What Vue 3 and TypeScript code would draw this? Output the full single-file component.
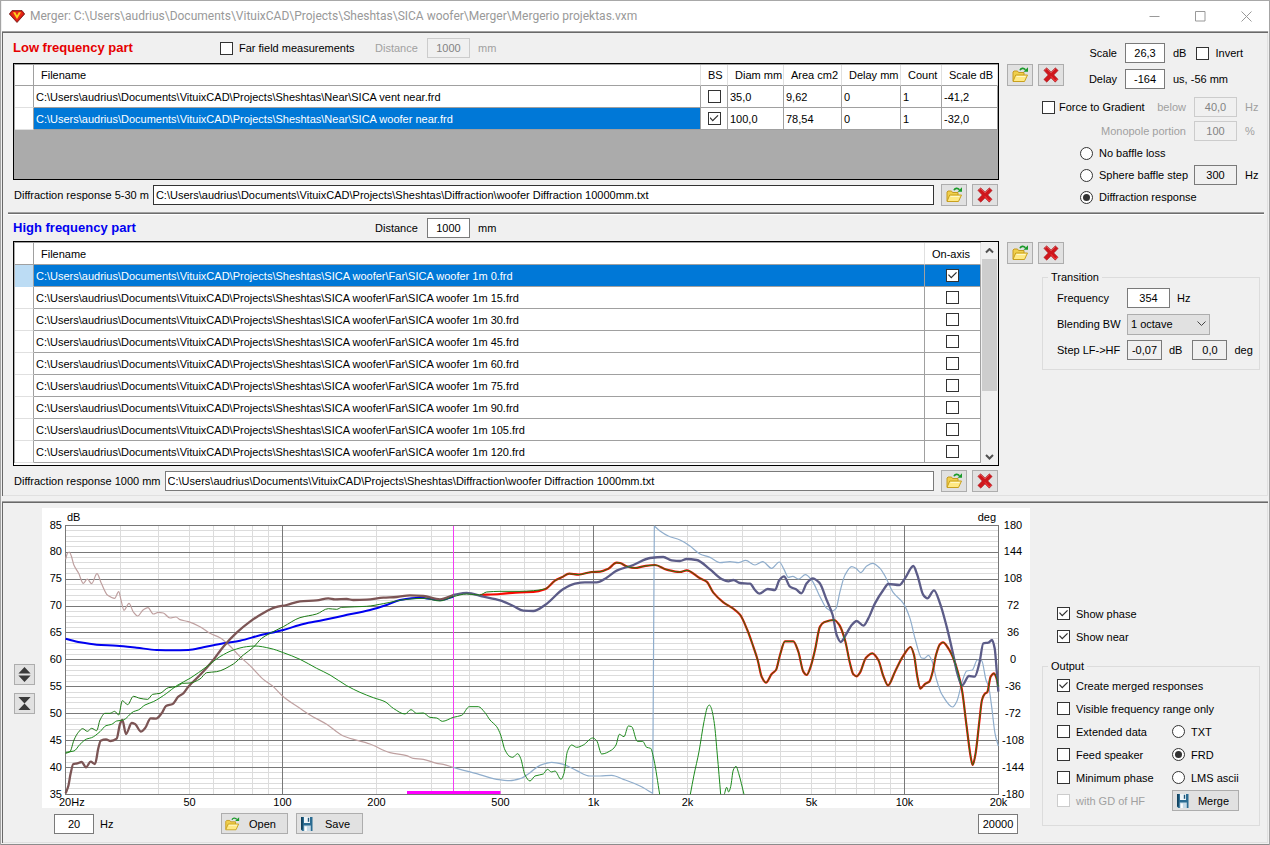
<script setup lang="ts">
import { ref } from 'vue'

type Point = [number, number]

interface NearFile {
  path: string
  bs: boolean
  cells: string[]
}

const root = 'C:\\Users\\audrius\\Documents\\VituixCAD\\Projects\\Sheshtas\\'

const nearFiles = ref<NearFile[]>([
  { path: root + 'Near\\SICA vent near.frd', bs: false, cells: ['35,0', '9,62', '0', '1', '-41,2'] },
  { path: root + 'Near\\SICA woofer near.frd', bs: true, cells: ['100,0', '78,54', '0', '1', '-32,0'] },
])
const nearHeads = ['Diam mm', 'Area cm2', 'Delay mm', 'Count', 'Scale dB']

const farFiles = ref(
  [0, 15, 30, 45, 60, 75, 90, 105, 120].map((angle) => ({
    path: `${root}SICA woofer\\Far\\SICA woofer 1m ${angle}.frd`,
    onAxis: angle === 0,
  })),
)

const baffle = ref('diffraction')
const format = ref('frd')

/* Plot frame inside the chart surface */
const left = 65.3
const decade = 311
const top = 525.3
const stepY = 26.9
const right = 998

const xOf = (f: number) => Math.floor(left + Math.log10(f / 20) * decade) + 0.5
const yOf = (db: number) => Math.floor(top + ((85 - db) / 5) * stepY) + 0.5

const minorX: number[] = []
for (const base of [10, 100, 1000, 10000]) {
  for (let k = 2; k < 10; k++) {
    const f = base * k
    if (f > 20 && f < 20000) minorX.push(xOf(f))
  }
}
const majorX = [100, 1000, 10000].map(xOf)
const minorY: number[] = []
for (let d = 36; d < 85; d++) if (d % 5) minorY.push(yOf(d))
const majorY = [80, 75, 70, 65, 60, 55, 50, 45, 40].map(yOf)

const dbLabels = [85, 80, 75, 70, 65, 60, 55, 50, 45, 40, 35]
const degLabels = [180, 144, 108, 72, 36, 0, -36, -72, -108, -144, -180]
const hzLabels = [
  { f: 50, t: '50' }, { f: 100, t: '100' }, { f: 200, t: '200' }, { f: 500, t: '500' },
  { f: 1000, t: '1k' }, { f: 2000, t: '2k' }, { f: 5000, t: '5k' }, { f: 10000, t: '10k' }, { f: 20000, t: '20k' },
]

const parse = (s: string): Point[] => s.trim().split(/\s+/).map((p) => p.split(',').map(Number) as Point)

/* Monotone-limited spline through the samples */
function curve(s: string): string {
  const p = parse(s)
  const slope = (a: Point, b: Point) => (b[1] - a[1]) / (b[0] - a[0])
  const m = p.map((_, i) => {
    if (i === 0) return slope(p[0], p[1])
    if (i === p.length - 1) return slope(p[i - 1], p[i])
    const a = slope(p[i - 1], p[i])
    const b = slope(p[i], p[i + 1])
    return a * b <= 0 ? 0 : (2 * a * b) / (a + b)
  })
  let d = `M${p[0][0]} ${p[0][1]}`
  for (let i = 1; i < p.length; i++) {
    const h = (p[i][0] - p[i - 1][0]) / 3
    const c1 = `${(p[i - 1][0] + h).toFixed(1)} ${(p[i - 1][1] + m[i - 1] * h).toFixed(1)}`
    const c2 = `${(p[i][0] - h).toFixed(1)} ${(p[i][1] - m[i] * h).toFixed(1)}`
    d += `C${c1} ${c2} ${p[i][0]} ${p[i][1]}`
  }
  return d
}

const mergedTail = `1665,242 1685,232 1708,221 1735,224 1775,216 1800,215 1825,206 1850,188 1860,189 1880,199 1905,204 1930,199
 1965,195 2000,209 2040,216 2060,211 2100,235 2120,245 2140,278 2170,307 2200,326 2220,344 2242,390 2260,440 2273,480 2285,530
 2298,548 2315,522 2328,510 2340,465 2355,424 2380,424 2395,455 2410,515 2420,525 2432,500 2445,450 2460,380 2472,367 2502,360
 2518,375 2535,420 2550,490 2560,523 2570,529 2580,518 2598,473 2617,460 2635,480 2650,528 2664,556 2685,515 2710,467 2732,441
 2742,465 2752,530 2761,566 2775,552 2788,545 2798,515 2808,465 2820,433 2829,427 2845,445 2862,480 2885,565 2900,680 2912,770
 2918,795 2926,765 2938,665 2946,600 2954,582 2962,576 2972,530 2982,520 2989,533 2995,560`

const phaseLow = curve(`197,178 202,160 208,156 214,168 222,196 236,220 250,250 262,237 275,251 291,221 304,250 323,286 344,295
 356,275 363,300 372,331 387,310 400,336 413,348 430,329 444,323 460,342 475,337 490,339 510,354 528,351 540,359 565,365 600,380
 630,400 660,413 690,438 720,470 750,497 790,538 820,560 850,590 900,625 930,645 980,673 1030,708 1110,732 1170,758 1220,767
 1240,775 1270,778 1310,790 1330,793 1360,802`)
const phaseHigh = curve(`1360,802 1380,808 1430,821 1490,838 1530,842 1560,836 1590,818 1620,796 1655,787 1690,793 1730,812
 1770,828 1800,828 1835,826 1870,838 1920,858 1958,880`) + 'L1963 78' + curve(`1963,78 1980,93 2005,108 2040,120 2070,138
 2100,162 2130,172 2160,188 2190,185 2215,188 2237,181 2265,195 2288,185 2315,205 2338,186 2352,208 2365,232 2378,229 2396,237
 2416,224 2435,240 2460,290 2480,325 2495,333 2508,326 2520,275 2535,225 2555,200 2568,205 2582,218 2600,198 2618,190 2640,205
 2655,228 2680,278 2710,310 2730,355 2745,415 2765,474 2773,475 2785,466 2795,480 2810,540 2825,582 2858,621 2870,605 2888,540
 2900,513 2917,510 2932,480 2945,482 2958,540 2966,560 2975,620 2985,700 2995,738`).replace('M', 'L')
const diffraction = curve(`197,416 240,427 290,434 350,437 410,443 470,450 520,451 565,450 610,442 670,430 720,422 780,406 850,390
 910,372 970,360 1030,347 1110,330 1160,315 1200,300 1260,293 1320,300 1360,290`)
const lowPart = curve(`197,880 205,858 212,820 220,792 232,790 245,786 258,802 272,785 285,792 295,745 302,722 318,718 332,723
 350,716 360,672 367,660 378,702 395,669 405,672 423,695 435,685 452,655 468,656 485,640 498,618 518,612 535,590 550,580 565,560
 600,525 640,480 670,440 710,398 750,365 785,342 825,322 860,315 900,304 950,301 985,295 1005,298 1040,297 1060,300 1100,299
 1150,293 1190,291 1230,286 1270,288 1320,298 1360,285`)
const highPart = curve(`1360,285 1400,279 1450,290 1500,301 1540,318 1570,332 1600,333 1635,315 1690,267 1725,251 1755,247 1790,247
 1820,233 1850,212 1900,195 1950,174 1990,171 2015,181 2040,183 2060,177 2090,180 2130,208 2165,237 2185,244 2200,240 2220,249
 2250,251 2265,270 2278,281 2303,267 2325,270 2338,240 2352,229 2370,260 2388,268 2404,280 2420,250 2438,235 2458,248 2480,300
 2498,345 2510,405 2522,426 2540,400 2555,375 2570,363 2590,377 2605,355 2625,310 2650,270 2665,252 2698,255 2715,235 2740,198
 2752,225 2770,285 2782,295 2802,271 2820,310 2840,380 2860,465 2872,520 2886,556 2907,528 2924,530 2938,490 2950,430 2965,428
 2976,420 2984,445 2990,510 2995,575`)
const merged = curve(`1440,285 1500,282 1560,277 1600,276 1635,268 ${mergedTail}`)
const mergedCore = curve(`197,760 210,755 222,720 235,697 248,686 262,694 275,685 290,692 300,660 315,640 330,640 344,634 356,645
 367,602 383,614 400,589 420,595 443,598 458,583 480,580 505,563 530,560 548,550 570,549 600,537 620,518 650,515 700,492 730,465
 760,442 785,415 810,400 850,380 900,353 950,342 985,326 1010,328 1025,322 1100,319 1150,311 1220,298 1270,295 1320,303 1360,290
 1400,282 1440,285 1460,276 1500,274 1560,274 1600,272 1635,267 ${mergedTail}`)
const nearSum = curve(`197,757 222,753 240,733 260,717 275,713 300,695 318,677 335,673 350,663 370,660 400,635 415,630 435,615
 460,605 500,580 530,557 570,535 620,500 660,470 700,450 740,440 765,438 810,445 850,458 900,478 950,505 990,525 1040,557
 1080,577 1120,593 1155,605 1180,625 1215,642 1233,629 1250,640 1270,639 1290,652 1310,654 1327,664 1360,652 1385,646 1408,620
 1435,620 1455,638 1470,660 1490,680 1502,705 1515,750 1530,770 1538,772 1553,761 1562,775 1575,825 1590,843 1605,828 1630,822
 1642,808 1655,816 1665,813 1683,838 1692,820 1702,755 1715,735 1730,742 1750,735 1778,714 1790,722 1805,762 1835,750 1848,735
 1858,703 1872,710 1885,678 1895,680 1912,724 1928,724 1940,742 1952,745 1962,780 1979,883`)
  + curve('2071,883 2082,825 2097,755 2112,665 2123,620 2128,615 2133,622 2143,670 2152,765 2162,883')
  + curve('2173,883 2180,862 2186,876 2192,860 2200,810 2208,799 2216,820 2232,883')
</script>

<template>
  <svg class="symbols" aria-hidden="true">
    <symbol id="i-open" viewBox="0 0 18 18">
      <path d="M2 15V6l1-1h3.500l1 1.500h5.500v3" fill="#f0cf4c" stroke="#c49a20" />
      <path d="M2 15.500l2.700-6.500h11.800l-3 6.500z" fill="#ffe984" stroke="#c8a01e" stroke-linejoin="round" />
      <path d="M5.500 10.500h9" stroke="#fff8c8" />
      <path d="M9 4.200c.8-2 3.500-2.700 5.500-.4" fill="none" stroke="#1a9a2a" stroke-width="1.600" />
      <path d="M12.500 5.700H17V1.300z" fill="#1a9a2a" />
    </symbol>
    <symbol id="i-del" viewBox="-1 -1 20 20">
      <path d="M1 3.800L4.200 1l4.900 4.600L13.800 1 17 3.900l-4.800 5 4.600 4.800-3.100 3.300-4.700-4.700L4.300 17 1 13.900 5.800 9z" fill="#cf171d" stroke="#a8282c" stroke-width=".6" stroke-linejoin="round" />
      <path d="M2 3.900l2.200-1.900 4.900 4.700L13.800 2" fill="none" stroke="#e46464" stroke-width=".8" />
      <path d="M9 10.500l4.700 5.200 2-2" fill="none" stroke="#ff4545" />
    </symbol>
    <symbol id="i-save" viewBox="0 0 14 16">
      <path d="M1 1h11.500v14H2.300L1 13.600z" fill="#2b6c92" />
      <path d="M1 1h1.700v12.500H1z" fill="#10425f" />
      <path d="M4 1h6v6H4z" fill="#eef5f9" />
      <path d="M7.800 1.800h1.400v4H7.800z" fill="#1f5578" />
      <path d="M3.800 9.500h7V15h-7z" fill="#c7dbe7" />
      <path d="M4.800 10.500h2V15h-2z" fill="#fff" />
    </symbol>
  </svg>

  <div class="window">
    <header class="titlebar">
      <svg class="gem" viewBox="0 0 16 13" aria-hidden="true">
        <path d="M3 .5h10L15.700 4 8 12.500.300 4z" fill="#d31a12" stroke="#5a0c08" stroke-width=".7" />
        <path d="M3.500 2h9l1.500 2L8 10.700 2 4z" fill="#e62a18" />
        <path d="M4 2.200h2.200L8 5.500l1.800-3.300H12L8 9z" fill="#ffd21e" />
      </svg>
      <h1>Merger: C:\Users\audrius\Documents\VituixCAD\Projects\Sheshtas\SICA woofer\Merger\Mergerio projektas.vxm</h1>
      <button class="sys" type="button" aria-label="Minimize"><svg viewBox="0 0 11 11"><path d="M.5 5.500h10" /></svg></button>
      <button class="sys" type="button" aria-label="Maximize"><svg viewBox="0 0 11 11"><path d="M.5.5h9.500v9.500H.5z" /></svg></button>
      <button class="sys" type="button" aria-label="Close"><svg viewBox="0 0 11 11"><path d="M.5.5l10 10M10.500.5l-10 10" /></svg></button>
    </header>

    <main class="panel">
      <section class="part">
        <div class="files">
          <div class="head">
            <h2 class="low">Low frequency part</h2>
            <label class="opt"><input type="checkbox" />Far field measurements</label>
            <label class="dim" for="lf-distance">Distance</label>
            <input id="lf-distance" class="num" value="1000" disabled />
            <span class="dim">mm</span>
          </div>
          <div class="frame near">
            <table>
              <colgroup>
                <col class="c-head" /><col /><col class="c-bs" /><col class="c-diam" /><col class="c-area" />
                <col class="c-delay" /><col class="c-count" /><col class="c-scale" />
              </colgroup>
              <thead>
                <tr><th></th><th>Filename</th><th>BS</th><th v-for="h in nearHeads" :key="h">{{ h }}</th></tr>
              </thead>
              <tbody>
                <tr v-for="(f, i) in nearFiles" :key="f.path">
                  <td></td>
                  <td :class="{ sel: i === 1 }">{{ f.path }}</td>
                  <td class="mid"><input v-model="f.bs" type="checkbox" aria-label="BS" /></td>
                  <td v-for="(c, k) in f.cells" :key="k">{{ c }}</td>
                </tr>
              </tbody>
            </table>
          </div>
          <div class="path">
            <label for="lf-path">Diffraction response 5-30 m</label>
            <input id="lf-path" class="text dark" :value="root + 'Diffraction\\woofer Diffraction 10000mm.txt'" />
            <div class="pair">
              <button class="tool" type="button" aria-label="Open"><svg><use href="#i-open" /></svg></button>
              <button class="tool" type="button" aria-label="Remove"><svg><use href="#i-del" /></svg></button>
            </div>
          </div>
        </div>

        <aside>
          <div class="aside-top">
            <div class="pair">
              <button class="tool" type="button" aria-label="Open"><svg><use href="#i-open" /></svg></button>
              <button class="tool" type="button" aria-label="Remove"><svg><use href="#i-del" /></svg></button>
            </div>
            <div class="scale-rows">
              <label for="scale">Scale</label>
              <input id="scale" class="num" value="26,3" />
              <div class="units"><span>dB</span><label class="opt"><input type="checkbox" />Invert</label></div>
              <label for="delay">Delay</label>
              <input id="delay" class="num" value="-164" />
              <span>us, -56 mm</span>
            </div>
          </div>
          <div class="baffle">
            <div class="split"><label class="opt near-gap"><input type="checkbox" />Force to Gradient</label><label class="dim" for="below">below</label></div>
            <input id="below" class="num" value="40,0" disabled />
            <span class="dim">Hz</span>
            <label class="dim end" for="mono">Monopole portion</label>
            <input id="mono" class="num" value="100" disabled />
            <span class="dim">%</span>
          </div>
          <div class="baffle radios">
            <label class="opt wide"><input v-model="baffle" type="radio" name="baffle" value="none" />No baffle loss</label>
            <label class="opt"><input v-model="baffle" type="radio" name="baffle" value="sphere" />Sphere baffle step</label>
            <input class="num readonly" value="300" readonly aria-label="Baffle step" />
            <span>Hz</span>
            <label class="opt wide"><input v-model="baffle" type="radio" name="baffle" value="diffraction" />Diffraction response</label>
          </div>
        </aside>
      </section>

      <hr />

      <section class="part">
        <div class="files">
          <div class="head short">
            <h2 class="high">High frequency part</h2>
            <span></span>
            <label for="hf-distance">Distance</label>
            <input id="hf-distance" class="num" value="1000" />
            <span>mm</span>
          </div>
          <div class="frame far">
            <table>
              <colgroup><col class="c-head" /><col /><col class="c-axis" /></colgroup>
              <thead><tr><th></th><th>Filename</th><th>On-axis</th></tr></thead>
              <tbody>
                <tr v-for="(f, i) in farFiles" :key="f.path" :class="{ current: i === 0 }">
                  <td></td>
                  <td>{{ f.path }}</td>
                  <td class="mid"><input v-model="f.onAxis" type="checkbox" aria-label="On-axis" /></td>
                </tr>
              </tbody>
            </table>
            <div class="scroll">
              <button type="button" aria-label="Scroll up"><svg viewBox="0 0 9 6"><path d="M1 4.500L4.500 1 8 4.500" /></svg></button>
              <div class="thumb"></div>
              <button type="button" aria-label="Scroll down"><svg viewBox="0 0 9 6"><path d="M1 1l3.500 3.500L8 1" /></svg></button>
            </div>
          </div>
          <div class="path">
            <label for="hf-path">Diffraction response 1000 mm</label>
            <input id="hf-path" class="text" :value="root + 'Diffraction\\woofer Diffraction 1000mm.txt'" />
            <div class="pair">
              <button class="tool" type="button" aria-label="Open"><svg><use href="#i-open" /></svg></button>
              <button class="tool" type="button" aria-label="Remove"><svg><use href="#i-del" /></svg></button>
            </div>
          </div>
        </div>

        <aside>
          <div class="pair far-tools">
            <button class="tool" type="button" aria-label="Open"><svg><use href="#i-open" /></svg></button>
            <button class="tool" type="button" aria-label="Remove"><svg><use href="#i-del" /></svg></button>
          </div>
          <fieldset class="transition">
            <legend>Transition</legend>
            <div class="row">
              <label for="freq">Frequency</label>
              <input id="freq" class="num" value="354" /><span>Hz</span>
            </div>
            <div class="row">
              <label for="blend">Blending BW</label>
              <div class="combo">
                <select id="blend"><option>1 octave</option></select>
                <svg viewBox="0 0 9 6" aria-hidden="true"><path d="M.5.5l4 4 4-4" /></svg>
              </div>
            </div>
            <div class="row">
              <label for="step-db" class="end">Step LF-&gt;HF</label>
              <input id="step-db" class="num small readonly" value="-0,07" readonly /><span>dB</span>
              <input class="num small readonly next" value="0,0" readonly aria-label="Step phase" /><span>deg</span>
            </div>
          </fieldset>
        </aside>
      </section>
    </main>

    <section class="panel lower">
      <div class="zoomers">
        <button type="button" aria-label="Expand"><svg viewBox="0 0 16 16"><path d="M8 0l6.500 7h-13zM8 16L1.500 9h13z" /></svg></button>
        <button type="button" aria-label="Collapse"><svg viewBox="0 0 16 16"><path d="M1.500 1h13L8 8zM1.500 15h13L8 8z" /></svg></button>
      </div>

      <div class="graph">
        <svg class="chart" viewBox="42 508 988 300" role="img" aria-label="Frequency response">
          <rect x="42" y="508" width="988" height="300" fill="#fff" />
          <g class="minor">
            <line v-for="x in minorX" :key="'x' + x" :x1="x" :x2="x" y1="526" y2="794" />
            <line v-for="y in minorY" :key="'y' + y" x1="66" :x2="right" :y1="y" :y2="y" />
          </g>
          <g class="major">
            <line v-for="x in majorX" :key="'x' + x" :x1="x" :x2="x" y1="526" y2="794" />
            <line v-for="y in majorY" :key="'y' + y" x1="66" :x2="right" :y1="y" :y2="y" />
            <rect x="65.5" y="525.5" width="933" height="269" fill="none" />
          </g>
          <path d="M453.500 526V794" stroke="#f53cf5" />
          <path d="M407 792.500h93.500" stroke="#f0f" stroke-width="3" />
          <g class="curves" transform="translate(0 500) scale(.33333)">
            <path :d="phaseLow" stroke="#bfa0a0" stroke-width="1.200" />
            <path :d="phaseHigh" stroke="#8fadcc" stroke-width="1.200" />
            <path :d="diffraction" stroke="#0000f0" stroke-width="2" />
            <path :d="lowPart" stroke="#7c5555" stroke-width="2.300" />
            <path :d="merged" stroke="#f80800" stroke-width="2.200" />
            <path :d="highPart" stroke="#5c5c88" stroke-width="2.300" />
            <path :d="nearSum" stroke="#1c8a1c" stroke-width="1" />
            <path :d="mergedCore" stroke="#1c7a14" stroke-width="1" />
          </g>
          <g class="ticks">
            <text x="67" y="521">dB</text>
            <text x="996" y="521" text-anchor="end">deg</text>
            <text v-for="(d, i) in dbLabels" :key="'d' + d" x="62" :y="Math.floor(529 + i * stepY)" text-anchor="end">{{ d }}</text>
            <text v-for="(d, i) in degLabels" :key="'g' + d" x="1013" :y="Math.floor(529 + i * stepY)" text-anchor="middle">{{ d }}</text>
            <text x="59" y="806">20Hz</text>
            <text v-for="h in hzLabels" :key="h.t" :x="xOf(h.f)" y="806" text-anchor="middle">{{ h.t }}</text>
          </g>
        </svg>
        <div class="chart-bar">
          <input class="num" value="20" aria-label="Minimum frequency" />
          <span class="hz">Hz</span>
          <button class="push" type="button"><svg class="ico"><use href="#i-open" /></svg><span>Open</span></button>
          <button class="push" type="button"><svg class="ico"><use href="#i-save" /></svg><span>Save</span></button>
          <input class="num last" value="20000" aria-label="Maximum frequency" />
        </div>
      </div>

      <div class="output">
        <div class="shows">
          <label class="opt"><input type="checkbox" checked />Show phase</label>
          <label class="opt"><input type="checkbox" checked />Show near</label>
        </div>
        <fieldset>
          <legend>Output</legend>
          <div class="choices">
            <label class="opt both"><input type="checkbox" checked />Create merged responses</label>
            <label class="opt both"><input type="checkbox" />Visible frequency range only</label>
            <label class="opt"><input type="checkbox" />Extended data</label>
            <label class="opt"><input v-model="format" type="radio" name="format" value="txt" />TXT</label>
            <label class="opt"><input type="checkbox" />Feed speaker</label>
            <label class="opt"><input v-model="format" type="radio" name="format" value="frd" />FRD</label>
            <label class="opt"><input type="checkbox" />Minimum phase</label>
            <label class="opt"><input v-model="format" type="radio" name="format" value="lms" />LMS ascii</label>
            <label class="opt dim"><input type="checkbox" disabled />with GD of HF</label>
            <button class="push" type="button"><svg class="ico"><use href="#i-save" /></svg><span>Merge</span></button>
          </div>
        </fieldset>
      </div>
    </section>
  </div>
</template>

<style>
body {
  margin: 0;
  background: #f0f0f0;
}
</style>

<style scoped>
.symbols {
  position: absolute;
  width: 0;
  height: 0;
}
.window {
  box-sizing: border-box;
  min-height: 100vh;
  display: flex;
  flex-direction: column;
  padding: 0 2px 2px;
  border-top: 1px solid #a8a8a8;
  background: #f0f0f0;
  box-shadow: inset 1px 0 #a4a4a4, inset -1px 0 #a4a4a4, inset 0 -1px #8c8c8c;
  color: #000;
  font: 11px/14px "Liberation Sans", Arial, sans-serif;
  white-space: nowrap;
}
.window *, .window *::after { box-sizing: border-box; }
input, select, button { font: inherit; color: inherit; margin: 0; }
h1, h2 { margin: 0; }

.titlebar {
  height: 30px;
  display: flex;
  align-items: center;
  padding-left: 7px;
  margin-right: -1px;
  background: #fff;
}
.gem { width: 16px; height: 13px; margin-right: 5px; }
h1 {
  flex: 1;
  color: #999;
  font: 12px/16px Roboto, "Open Sans", sans-serif;
}
.sys {
  width: 46px;
  height: 29px;
  padding: 0;
  border: 0;
  background: none;
}
.sys svg { width: 11px; height: 11px; display: block; margin: auto; }
.sys path { fill: none; stroke: #999; }

.panel {
  border: 1px solid #696969;
  border-width: 1px 0 0 1px;
  box-shadow: 0 -1px #a0a0a0, inset -1px -1px #e0e0e0;
  margin-top: 1px;
  padding: 0 3px 4px 0;
}
.part {
  display: grid;
  grid-template-columns: minmax(0, 1fr) 253px;
  column-gap: 8px;
  padding: 0 5px 0 10px;
}
hr {
  margin: 4px 1px 0 5px;
  border: 0;
  height: 2px;
  background: #6e6e6e;
  border-top: 1px solid #a0a0a0;
  box-shadow: 0 1px #fff;
}
.head {
  display: grid;
  grid-template-columns: 207px 155px 52px 43px auto;
  align-items: center;
  height: 30px;
}
.head > span:last-child { margin-left: 8px; }
.short { height: 27px; }
h2 { font: bold 13px/16px "Liberation Sans", Arial, sans-serif; }
.low { color: #e60000; }
.high { color: #0000f0; }
.dim { color: #a0a0a0; }
.end { text-align: right; }

.opt {
  display: flex;
  align-items: center;
  gap: 6px;
}
.near-gap { gap: 4px; }
input[type='checkbox'], input[type='radio'] {
  appearance: none;
  flex: none;
  position: relative;
  width: 13px;
  height: 13px;
  border: 1px solid #333;
  background: #fff;
}
input[type='radio'] { border-radius: 50%; }
input[type='checkbox']:disabled { border-color: #ccc; }
input[type='checkbox']:checked::after {
  content: '';
  position: absolute;
  inset: 1px;
  background: #333;
  clip-path: polygon(0 45%, 10% 37%, 36% 64%, 90% 10%, 100% 20%, 36% 84%);
}
input[type='radio']:checked::after {
  content: '';
  position: absolute;
  inset: 2px;
  border-radius: 50%;
  background: #333;
}
.num, .text {
  height: 20px;
  border: 1px solid #7a7a7a;
  border-radius: 0;
  background: #fff;
  padding: 0;
  outline: 0;
}
.num { width: 43px; text-align: center; }
.num:disabled {
  background: #f0f0f0;
  border-color: #ccc;
  color: #838383;
}
.readonly { background: #f0f0f0; }
.small { width: 35px; }
.text { flex: 1; min-width: 0; padding: 0 2px; }
.dark { border-color: #333; }

.frame {
  border: 1px solid #000;
  background: #ababab;
  overflow: hidden;
}
.near { height: 117px; }
.far { height: 225px; display: flex; align-items: flex-start; background: #fff; }
table {
  width: 100%;
  table-layout: fixed;
  border-collapse: separate;
  border-spacing: 0;
  border-top: 1px solid #a0a0a0;
  border-left: 1px solid #ababab;
}
.far table { flex: 1; width: auto; min-width: 0; }
.c-head { width: 19px; }
.c-bs { width: 27px; }
.c-diam { width: 56px; }
.c-area { width: 58px; }
.c-delay { width: 59px; }
.c-count { width: 41px; }
.c-scale { width: 56px; }
.c-axis { width: 56px; }
th, td {
  height: 22px;
  padding: 0 2px;
  border-right: 1px solid #a0a0a0;
  border-bottom: 1px solid #a0a0a0;
  background: #fff;
  text-align: left;
  font-weight: normal;
  overflow: hidden;
}
th { height: 21px; padding: 0 0 0 7px; border-right-color: #e0e0e0; }
th:first-child { border-right-color: #a0a0a0; }
.far th { height: 22px; }
td:first-child { border-bottom-color: #e0e0e0; padding: 0; }
.mid { padding: 0; }
.mid input { display: block; margin: auto; }
.sel, .current td { background: #0078d7; color: #fff; }
.current td:first-child { background: #bcdcf4; border-bottom-color: #bcdcf4; }
.scroll {
  align-self: stretch;
  width: 17px;
  display: flex;
  flex-direction: column;
  background: #f0f0f0;
}
.scroll button {
  width: 17px;
  height: 17px;
  padding: 0;
  border: 0;
  background: none;
}
.scroll button:last-child { margin-top: auto; }
.scroll svg { display: block; width: 9px; height: 6px; margin: auto; }
.scroll path { fill: none; stroke: #505050; stroke-width: 2; }
.thumb { height: 132px; margin: 0 1px; background: #cdcdcd; }

.path {
  display: flex;
  align-items: center;
  height: 22px;
  margin-top: 4px;
  padding-left: 1px;
}
.path label { margin-right: 4px; }
.path .pair { margin-left: 7px; margin-right: 1px; }
.pair { display: flex; gap: 5px; }
.tool {
  width: 26px;
  height: 22px;
  padding: 0;
  border: 1px solid #adadad;
  background: #e1e1e1;
}
.tool svg { display: block; width: 18px; height: 18px; margin: auto; }

.aside-top { display: flex; align-items: flex-start; }
.aside-top .pair { margin-top: 31px; }
.scale-rows {
  display: grid;
  grid-template-columns: 53px 40px auto;
  gap: 6px 8px;
  align-items: center;
  margin-top: 10px;
}
.scale-rows > label { text-align: right; }
.scale-rows .num { width: 40px; }
.units { display: flex; gap: 10px; align-items: center; }
.baffle {
  display: grid;
  grid-template-columns: 144px 43px auto;
  gap: 4px 8px;
  align-items: center;
  margin: 8px 0 0 35px;
}
.split { display: flex; justify-content: space-between; }
.radios {
  margin-top: 1px;
  row-gap: 0;
  grid-auto-rows: 22px;
}
.radios .opt { padding-left: 38px; }
.wide { grid-column: 1 / -1; }

.far-tools { margin-top: 28px; }
fieldset {
  margin: 0 0 0 35px;
  padding: 0 0 0 14px;
  border: 1px solid #dcdcdc;
  min-width: 0;
}
legend { padding: 0 3px; margin-left: -9px; }
.transition { margin-top: 6px; height: 100px; }
.row { display: flex; align-items: center; height: 20px; margin: 4px 0 6px; }
.row + .row { margin-top: 0; }
.row > label { width: 62px; margin-right: 8px; }
.row > span { margin-left: 7px; }
.next { margin-left: 10px; }
.combo { display: grid; align-items: center; }
.combo > * { grid-area: 1 / 1; }
.combo select {
  appearance: none;
  width: 83px;
  height: 21px;
  border: 1px solid #adadad;
  border-radius: 0;
  background: #e1e1e1;
  padding: 0 3px;
}
.combo svg {
  width: 9px;
  height: 6px;
  justify-self: end;
  margin-right: 4px;
  pointer-events: none;
}
.combo path { fill: none; stroke: #444; }

.lower {
  display: grid;
  grid-template-columns: 39px minmax(0, 1fr) 230px;
  align-content: start;
  flex: 1;
  margin-top: 6px;
  padding-top: 5px;
  padding-right: 8px;
}
.zoomers {
  display: flex;
  flex-direction: column;
  gap: 8px;
  padding: 156px 0 0 11px;
}
.zoomers button {
  width: 21px;
  height: 21px;
  padding: 0;
  border: 1px solid #adadad;
  background: #e1e1e1;
}
.zoomers svg { display: block; width: 15px; height: 15px; margin: auto; }
.zoomers path { fill: #3a3a3a; }
.chart { display: block; width: 100%; height: auto; }
.minor line { stroke: #dcdcdc; }
.major line, .major rect { stroke: #787878; }
.curves path { fill: none; vector-effect: non-scaling-stroke; stroke-linejoin: round; }
.ticks { font: 11px "Liberation Sans", Arial, sans-serif; }
.chart-bar {
  display: flex;
  align-items: center;
  height: 21px;
  margin-top: 5px;
  padding: 0 12px;
}
.chart-bar .num { width: 40px; }
.hz { width: 127px; padding-left: 6px; }
.chart-bar .last { margin-left: auto; }
.push {
  display: flex;
  align-items: center;
  width: 67px;
  height: 21px;
  padding: 0 2px;
  border: 1px solid #adadad;
  background: #e1e1e1;
}
.push + .push { margin-left: 8px; }
.push span { flex: 1; text-align: center; }
.ico { width: 16px; height: 16px; }

.shows {
  display: grid;
  grid-auto-rows: 23px;
  padding: 94px 0 0 27px;
}
.output fieldset { margin: 11px 0 0 12px; height: 167px; }
.choices {
  display: grid;
  grid-template-columns: 115px auto;
  grid-auto-rows: 23px;
  align-items: center;
  margin-top: 1px;
}
.both { grid-column: 1 / -1; }
</style>
